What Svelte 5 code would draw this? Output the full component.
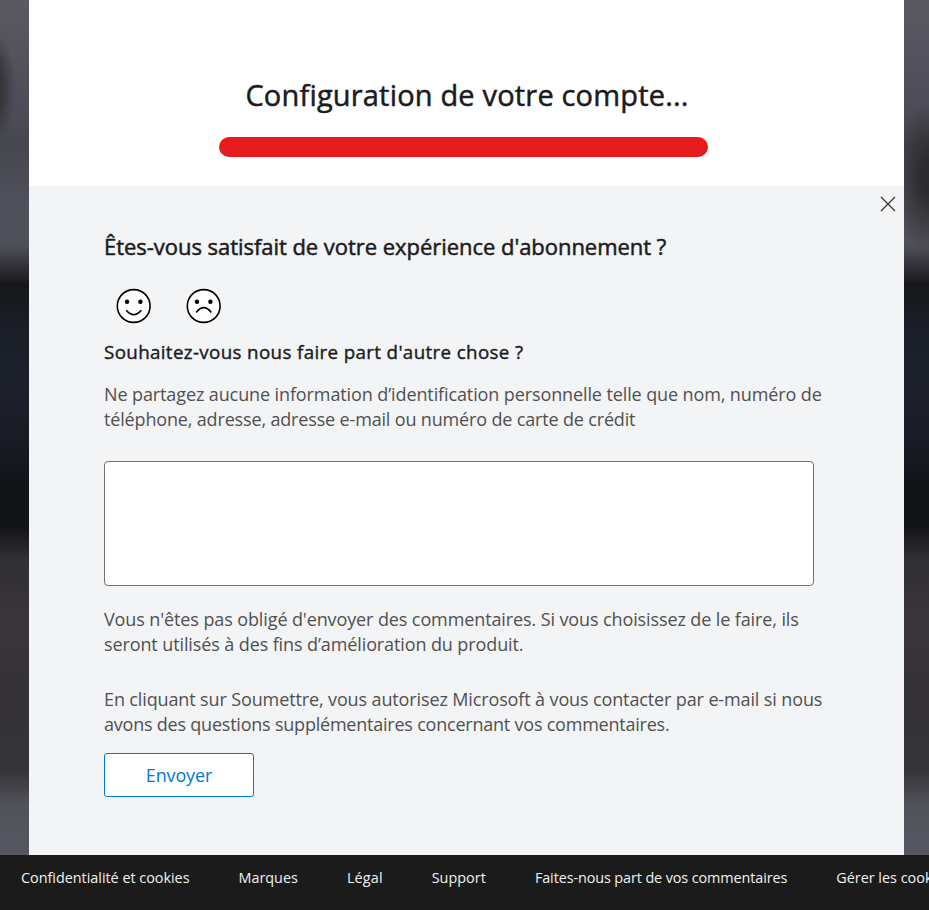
<script>
  const links = [
    { text: 'Confidentialité et cookies', tracking: -0.02 },
    { text: 'Marques', tracking: 0 },
    { text: 'Légal', tracking: 0.15 },
    { text: 'Support', tracking: 0.03 },
    { text: 'Faites-nous part de vos commentaires', tracking: -0.1 },
    { text: 'Gérer les cookies', tracking: 0 }
  ];
</script>

<div class="page">
  <div class="stage">
    <main>
      <section class="setup">
        <h1>Configuration de votre compte...</h1>
        <div class="progress"></div>
      </section>
      <section class="survey">
        <button class="close" aria-label="Fermer">
          <svg width="16" height="16" viewBox="0 0 16 16"><path d="M1 1L15 15M15 1L1 15" stroke="#333" stroke-width="1.2" /></svg>
        </button>
        <h2>Êtes-vous satisfait de votre expérience d'abonnement ?</h2>
        <div class="faces">
          <svg width="36" height="36" viewBox="0 0 36 36"><circle cx="17.7" cy="18" r="16.4" /><circle class="eye" cx="11" cy="13.7" r="2.2" /><circle class="eye" cx="24.4" cy="13.7" r="2.2" /><path d="M10.2 22.2Q17.7 31 25.3 22.2" /></svg>
          <svg width="36" height="36" viewBox="0 0 36 36"><circle cx="17.7" cy="18" r="16.4" /><circle class="eye" cx="11" cy="13.7" r="2.2" /><circle class="eye" cx="24.4" cy="13.7" r="2.2" /><path d="M10.2 24.4Q17.7 14.8 25.3 24.4" /></svg>
        </div>
        <h3>Souhaitez-vous nous faire part d'autre chose ?</h3>
        <p class="warn">Ne partagez aucune information d’identification personnelle telle que nom, numéro de<br /><span class="tight">téléphone, adresse, adresse e-mail ou numéro de carte de crédit</span></p>
        <textarea class="comment" aria-label="Commentaires"></textarea>
        <p class="optional">Vous n'êtes pas obligé d'envoyer des commentaires. Si vous choisissez de le faire, ils<br />seront utilisés à des fins d’amélioration du produit.</p>
        <p class="consent">En cliquant sur Soumettre, vous autorisez Microsoft à vous contacter par e-mail si nous<br /><span class="tighter">avons des questions supplémentaires concernant vos commentaires.</span></p>
        <button class="send">Envoyer</button>
      </section>
    </main>
  </div>
  <footer>{#each links as link}<a href="#top" style="letter-spacing: {link.tracking}px">{link.text}</a>{/each}</footer>
</div>

<style>
  .page { width: 929px; height: 910px; overflow: hidden; display: flex; flex-direction: column; font-family: "Open Sans", "Noto Sans", sans-serif; box-sizing: border-box; }
  .page * { box-sizing: border-box; }
  .stage { height: 855px; padding-left: 29px; padding-right: 25px;
    background:
      radial-gradient(ellipse 28px 60px at -12px 88px, #2b2b2d 30%, transparent),
      radial-gradient(ellipse 36px 75px at 100% 178px, #2b2a2c 20%, transparent),
      linear-gradient(#5a5962 0, #4d4d59 110px, #46464e 145px, #50505c 200px, #50505a 245px, #16171a 285px, #1a1e27 330px, #1d212b 385px, #181a23 450px, #121317 490px, #121317 525px, #302f33 558px, #3a3539 620px, #343236 700px, #353438 770px, #52525b 805px, #575762 855px); }
  main { height: 100%; display: flex; flex-direction: column; background: #f3f4f6; }
  .setup { height: 186px; background: #fff; padding-top: 74px; display: flex; flex-direction: column; align-items: center; }
  h1, h2, h3, p { margin: 0; white-space: nowrap; color: #1b1b20; font-weight: 400; }
  h1 { font-size: 29px; line-height: 42px; letter-spacing: 0.18px; padding-left: 1px; -webkit-text-stroke: 0.5px #1b1b20; }
  .progress { width: 489px; height: 20px; margin: 21px 6px 0 0; border-radius: 10px; background: #e71c1c; }
  .survey { flex: 1; padding-left: 75px; display: flex; flex-direction: column; align-items: flex-start; }
  .close { border: 0; background: none; padding: 0; height: 16px; align-self: flex-end; margin: 10px 8px 0 0; display: flex; }
  h2 { font-size: 22px; line-height: 30px; margin-top: 19px; letter-spacing: -0.04px; -webkit-text-stroke: 0.5px #1b1b20; }
  .faces { display: flex; gap: 34px; margin: 27px 0 0 12px; }
  .faces svg { fill: none; stroke: #000; stroke-width: 1.6; }
  .faces circle { fill: #fff; }
  .faces .eye { fill: #000; stroke: none; }
  h3 { font-size: 18.75px; line-height: 26px; margin-top: 15px; letter-spacing: 0.36px; -webkit-text-stroke: 0.4px #1b1b20; }
  p { font-size: 18px; line-height: 25px; color: #505050; letter-spacing: -0.11px; }
  .tight { letter-spacing: -0.16px; }
  .tighter { letter-spacing: -0.22px; }
  .warn { margin-top: 17px; }
  .comment { display: block; resize: none; padding: 8px; width: 710px; height: 125px; margin: 29px 0 0; border: 1px solid #707070; border-radius: 4px; background: #fff; }
  .optional { margin-top: 21px; }
  .consent { margin-top: 30px; letter-spacing: -0.125px; }
  .send { width: 150px; height: 44px; margin-top: 16px; padding: 0; border: 1px solid #0078d4; border-radius: 3px; background: #fff; color: #0078d4; font: 18px "Open Sans", sans-serif; letter-spacing: -0.15px; }
  footer { flex: 1; background: #1b1b1b; display: flex; gap: 49px; padding: 13px 0 0 21px; white-space: nowrap; }
  a { color: #f2f2f2; text-decoration: none; font-size: 14.4px; line-height: 20px; }
</style>
